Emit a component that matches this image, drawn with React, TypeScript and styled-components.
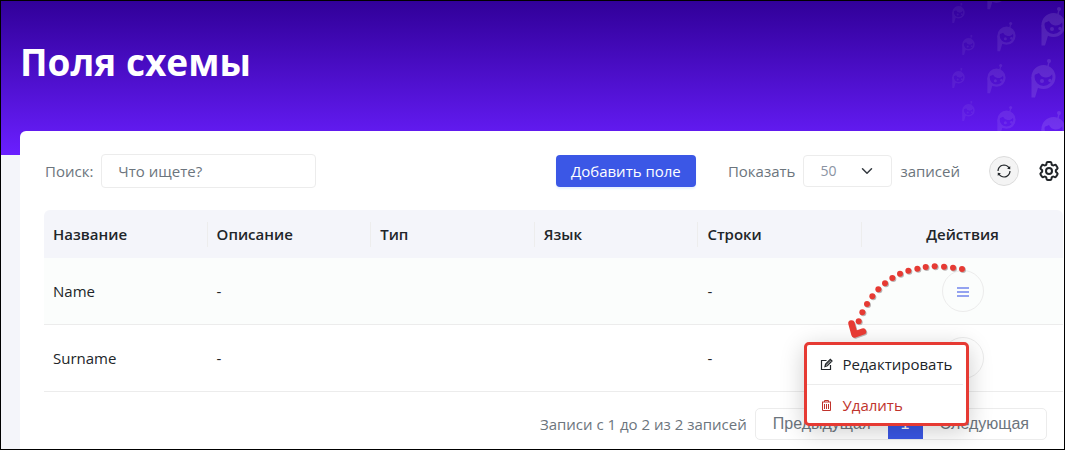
import React from 'react';
import styled, { createGlobalStyle } from 'styled-components';
import { ChevronDown } from 'lucide-react';
import { AiOutlineSync } from 'react-icons/ai';
import { HiOutlineCog6Tooth } from 'react-icons/hi2';

const Global = createGlobalStyle`
  *, *::before, *::after { box-sizing: border-box; }
  body { margin: 0; background: #f4f5fa; font-family: "Open Sans", "Noto Sans", sans-serif; font-size: 15px; line-height: 24px; color: #212529; }
  button, input, select { font: inherit; color: inherit; margin: 0; }
`;

const Page = styled.div`
  display: flex;
  flex-direction: column;
  min-height: 100vh;
  border: 1px solid #000;
  overflow: hidden;
`;

const Hero = styled.header`
  display: flex;
  justify-content: space-between;
  height: 154px;
  padding-left: 19px;
  background: linear-gradient(#310099, #6a1fff);
`;

const Title = styled.h1`
  margin: 35px 0 0;
  color: #fff;
  font-size: 37px;
  line-height: 52px;
  font-weight: 700;
`;

const Pattern = styled.svg`
  flex: none;
  width: 140px;
  height: 154px;
  color: #fff;
`;

const Card = styled.main`
  position: relative;
  flex: 1;
  margin: -24px 0 0 19px;
  padding: 23px 1px 8px 24px;
  background: #fff;
  border-top-left-radius: 6px;
`;

const Toolbar = styled.div`
  display: flex;
  align-items: center;
  height: 34px;
  margin-bottom: 22px;
  padding-left: 1px;
  color: #6c757d;
`;

const Label = styled.label`
  display: flex;
  align-items: center;
  gap: 8px;
`;

const SearchInput = styled.input`
  width: 215px;
  height: 34px;
  padding: 0 16px;
  border: 1px solid #ececec;
  border-radius: 4px;
  background: #fff;
  outline: none;
  &::placeholder { color: #6c757d; opacity: 1; }
`;

const PrimaryButton = styled.button`
  width: 140px;
  height: 32px;
  margin: 0 32px 0 auto;
  padding: 0;
  border: 0;
  border-radius: 4px;
  background: #3b57e6;
  box-shadow: 0 2px 2px #e8f1ff;
  color: #fff;
`;

const SelectBox = styled.span`
  display: grid;
  align-items: center;
  width: 89px;
  height: 32px;
  border: 1px solid #ececec;
  border-radius: 4px;
  > * { grid-area: 1 / 1; }
  > svg { justify-self: end; margin-right: 15px; color: #343a40; pointer-events: none; }
`;

const Select = styled.select`
  width: 100%;
  height: 30px;
  padding: 0 16px;
  border: 0;
  background: transparent;
  appearance: none;
  font-size: 14px;
  color: #8a93a2;
`;

const RefreshButton = styled.button`
  display: grid;
  place-items: center;
  width: 30px;
  height: 30px;
  margin-left: 29px;
  padding: 0;
  border: 1px solid #dcdcdc;
  border-radius: 50%;
  background: #f4f4f4;
  color: #212529;
`;

const SettingsButton = styled.button`
  display: grid;
  place-items: center;
  width: 24px;
  height: 24px;
  margin: 0 2px 0 18px;
  padding: 0;
  border: 0;
  background: none;
  color: #212529;
  path { stroke-width: 2; }
`;

const Table = styled.table`
  width: 100%;
  table-layout: fixed;
  border-collapse: separate;
  border-spacing: 0;
`;

const HeadCell = styled.th<{ $actions?: boolean }>`
  position: relative;
  width: ${p => (p.$actions ? '201px' : 'auto')};
  height: 48px;
  padding: 0 9px;
  background: #f4f5fa;
  font-weight: 600;
  text-align: ${p => (p.$actions ? 'center' : 'left')};
  &:first-child { border-top-left-radius: 6px; }
  &:last-child { border-top-right-radius: 6px; }
  &:not(:last-child)::after {
    content: '';
    position: absolute;
    top: 12px;
    right: 0;
    width: 1px;
    height: 25px;
    background: #ededed;
  }
`;

const Row = styled.tr<{ $active?: boolean }>`
  background: ${p => (p.$active ? '#fbfdfc' : '#fff')};
`;

const Cell = styled.td`
  height: 67px;
  padding: 0 9px;
  border-bottom: 1px solid #ececec;
`;

const Actions = styled.div`
  position: relative;
  width: 42px;
  height: 42px;
  margin: 0 auto;
`;

const RoundButton = styled.button`
  display: grid;
  place-items: center;
  width: 42px;
  height: 42px;
  padding: 0;
  border: 1px solid #ececec;
  border-radius: 50%;
  background: transparent;
  color: #94a3f0;
`;

const Arrow = styled.svg`
  position: absolute;
  z-index: 3;
  top: -20px;
  left: -102px;
  width: 140px;
  height: 100px;
  pointer-events: none;
`;

const Menu = styled.div`
  position: absolute;
  z-index: 2;
  top: 72px;
  right: 15px;
  width: 165px;
  padding-right: 3px;
  border: 3px solid #e63a33;
  border-radius: 5px;
  background: #fff;
  box-shadow: 0 5px 24px rgba(0, 0, 0, 0.2);
`;

const MenuItem = styled.button<{ $danger?: boolean }>`
  display: flex;
  align-items: center;
  gap: 10px;
  width: 100%;
  height: 39px;
  padding: 0 0 1px 13px;
  border: 0;
  background: none;
  color: ${p => (p.$danger ? '#c0332c' : '#212529')};
  & + & {
    padding-top: 2px;
    padding-bottom: 0;
    border-top: 1px solid #ececec;
  }
`;

const Footer = styled.footer`
  display: flex;
  align-items: center;
  justify-content: flex-end;
  gap: 8px;
  margin: 16px 16px 0 0;
  color: #6c757d;
`;

const Pager = styled.nav`
  display: flex;
  height: 32px;
  border: 1px solid #ececec;
  border-radius: 5px;
  font-family: "Liberation Sans", Arial, sans-serif;
  font-size: 16px;
`;

const PageButton = styled.button<{ $current?: boolean }>`
  height: 30px;
  padding: 0 ${p => (p.$current ? '13px' : '17px')};
  border: 0;
  background: ${p => (p.$current ? '#3b57e6' : 'transparent')};
  color: ${p => (p.$current ? '#fff' : '#6c757d')};
`;

const bots = [
  { x: 27, y: 3, s: 13 }, { x: 37, y: 35, s: 13 }, { x: 27, y: 68, s: 13 }, { x: 37, y: 101, s: 13 },
  { x: 62, y: -20, s: 19 }, { x: 72, y: 22, s: 19 }, { x: 62, y: 64, s: 19 }, { x: 72, y: 106, s: 19 },
  { x: 116, y: 7, s: 25 }, { x: 106, y: 59, s: 25 }, { x: 116, y: 111, s: 25 },
];

const dots = [
  [546, 57], [519, 53], [492, 50], [464, 49], [437, 51], [412, 56], [385, 62], [360, 71],
  [337, 84], [315, 100], [295, 118], [277, 139], [261, 162], [247, 187], [236, 214],
];

const BotPattern = () => (
  <Pattern viewBox="-1 1 140 154" aria-hidden="true">
    <defs>
      <g id="bot" fill="currentColor">
        <circle cx="12.500" cy="18" r="10.500" fill="none" stroke="currentColor" strokeWidth="3" />
        <path d="M0.500 18V38.500H4L7.500 27Q3.500 24 3 18Z" />
        <path d="M3 14A10 10 0 0 1 22 14Q19 19 14 18.500Q10 18 8 14Q6 15 3 16Z" />
        <circle cx="11" cy="22" r="2" />
        <circle cx="19" cy="21.500" r="1.700" />
        <circle cx="18" cy="2" r="2" />
        <path d="M17.300 3H18.700L17.500 8H16Z" />
      </g>
    </defs>
    {bots.map(b => (
      <use key={`${b.x}-${b.y}`} href="#bot" opacity={b.s / 230} transform={`translate(${b.x} ${b.y}) scale(${b.s / 25})`} />
    ))}
  </Pattern>
);

const DottedArrow = () => (
  <Arrow viewBox="840 250 140 100" aria-hidden="true">
    {[{ c: '#b9b4b4', d: 1 }, { c: '#e63a33', d: 0 }].map(l => (
      <g key={l.c} fill={l.c} stroke="none" transform={`translate(${l.d} ${l.d})`}>
        {dots.map(([x, y]) => <circle key={x} cx={780 + x / 3} cy={250 + y / 3} r="3" />)}
        <path d="M851.500 323.500L854.500 334.500L863 331.500" fill="none" stroke={l.c} strokeWidth="6.500" strokeLinecap="round" strokeLinejoin="round" />
      </g>
    ))}
  </Arrow>
);

const RowMenu = () => (
  <Menu role="menu">
    <MenuItem role="menuitem">
      <svg width="13" height="13" viewBox="0 0 13 13" fill="none" stroke="currentColor" strokeWidth="1.200">
        <path d="M6.500 2.500H1.500V11.500H10.500V7" />
        <path d="M5 8.500L5.600 6L10.300 1.300L12 3L7.300 7.800Z" />
        <path d="M6 7.400L11 2.300" strokeWidth="1" />
      </svg>
      Редактировать
    </MenuItem>
    <MenuItem role="menuitem" $danger>
      <svg width="13" height="13" viewBox="0 0 13 13" fill="none" stroke="currentColor">
        <path d="M2 3H11M4.500 3V1.500H8.500V3M2.500 3V11.500H10.500V3M4.500 5V10M6.500 5V10M8.500 5V10" />
      </svg>
      Удалить
    </MenuItem>
  </Menu>
);

const rows = [
  { name: 'Name', active: true },
  { name: 'Surname', active: false },
];

export default function App() {
  return (
    <Page>
      <Global />
      <Hero>
        <Title>Поля схемы</Title>
        <BotPattern />
      </Hero>
      <Card>
        <Toolbar>
          <Label>Поиск:<SearchInput placeholder="Что ищете?" /></Label>
          <PrimaryButton>Добавить поле</PrimaryButton>
          <Label>
            Показать
            <SelectBox>
              <Select defaultValue="50"><option>50</option><option>100</option></Select>
              <ChevronDown size={18} />
            </SelectBox>
            записей
          </Label>
          <RefreshButton aria-label="Обновить">
            <AiOutlineSync size={16} />
          </RefreshButton>
          <SettingsButton aria-label="Настройки">
            <HiOutlineCog6Tooth size={24} />
          </SettingsButton>
        </Toolbar>
        <Table>
          <thead>
            <tr>
              <HeadCell>Название</HeadCell>
              <HeadCell>Описание</HeadCell>
              <HeadCell>Тип</HeadCell>
              <HeadCell>Язык</HeadCell>
              <HeadCell>Строки</HeadCell>
              <HeadCell $actions>Действия</HeadCell>
            </tr>
          </thead>
          <tbody>
            {rows.map(r => (
              <Row key={r.name} $active={r.active}>
                <Cell>{r.name}</Cell>
                <Cell>-</Cell>
                <Cell />
                <Cell />
                <Cell>-</Cell>
                <Cell>
                  <Actions>
                    <RoundButton aria-label="Действия">
                      <svg width="12" height="12" viewBox="0 0 12 12" fill="currentColor">
                        <path d="M0 2H12V4H0ZM0 6H12V8H0ZM0 10H12V12H0Z" />
                      </svg>
                    </RoundButton>
                    {r.active && <><RowMenu /><DottedArrow /></>}
                  </Actions>
                </Cell>
              </Row>
            ))}
          </tbody>
        </Table>
        <Footer>
          <span>Записи с 1 до 2 из 2 записей</span>
          <Pager>
            <PageButton>Предыдущая</PageButton>
            <PageButton $current>1</PageButton>
            <PageButton>Следующая</PageButton>
          </Pager>
        </Footer>
      </Card>
    </Page>
  );
}
